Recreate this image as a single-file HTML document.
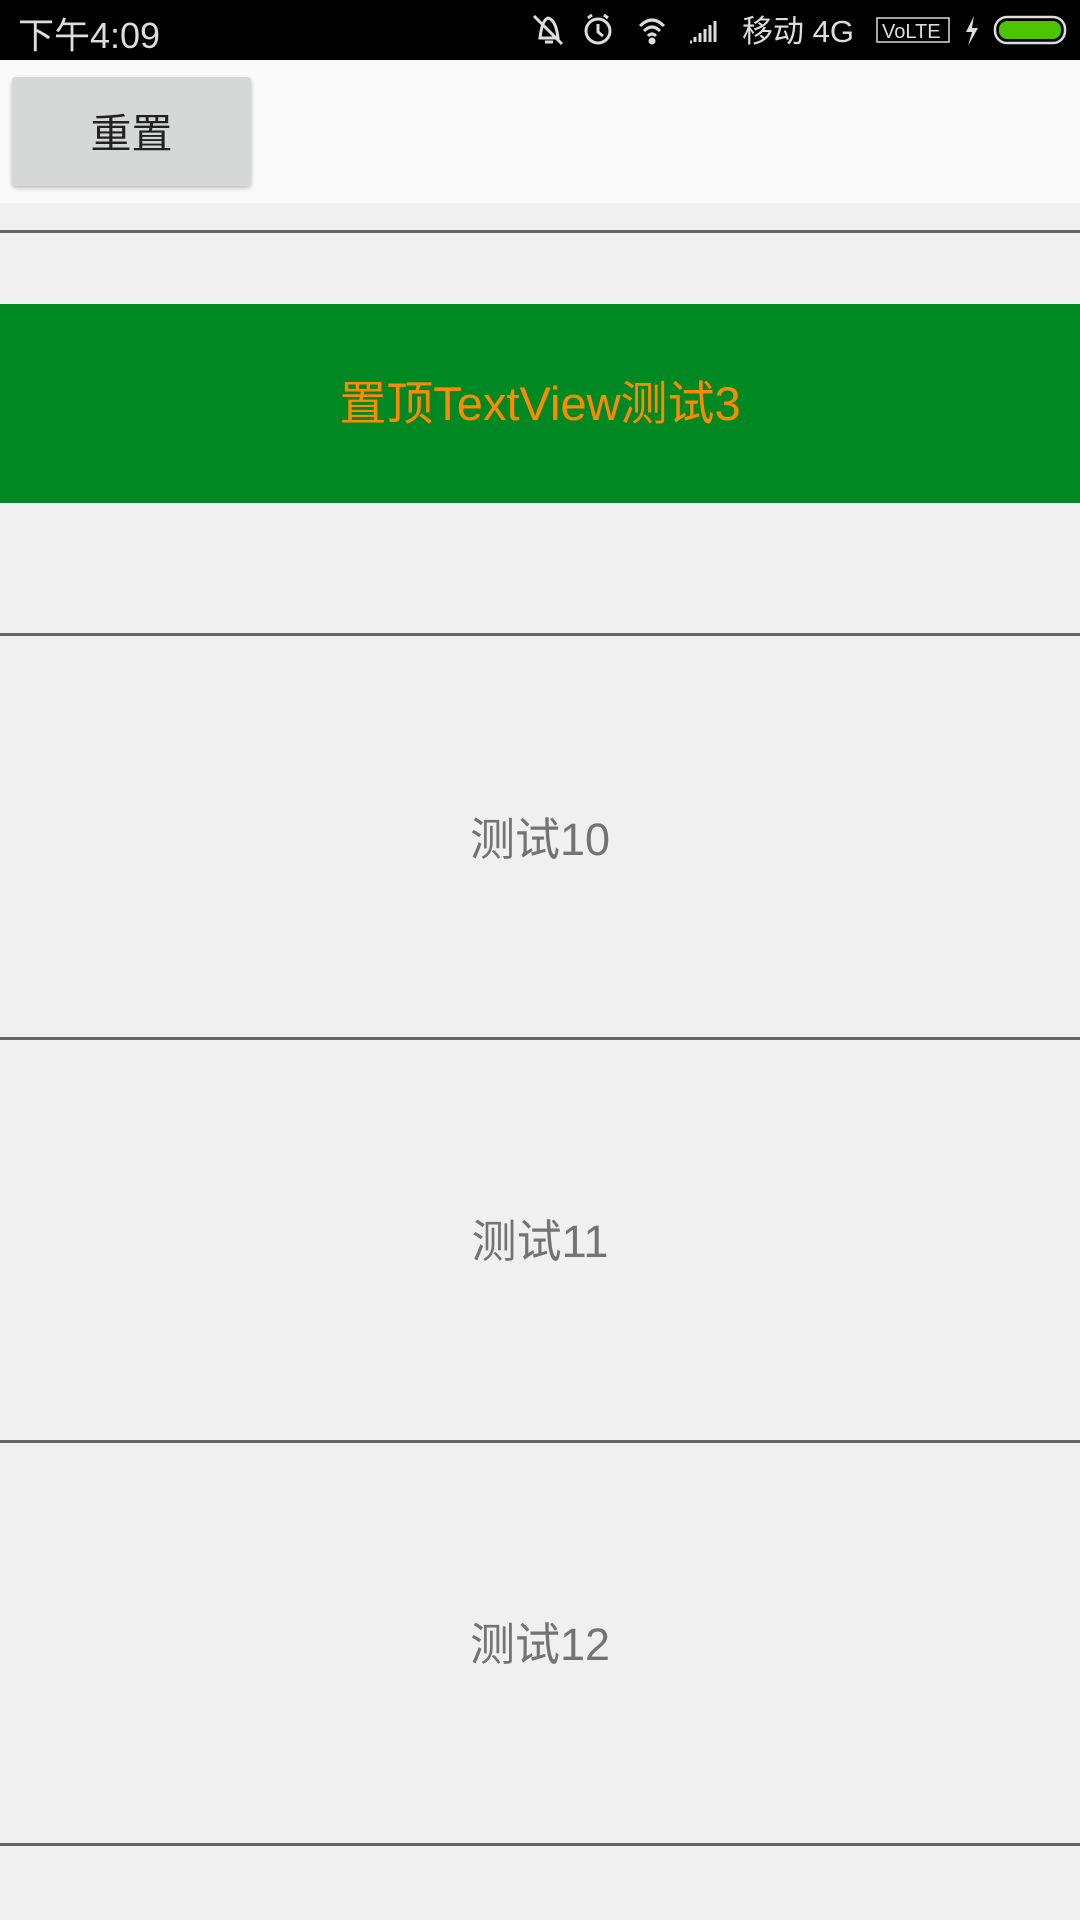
<!DOCTYPE html>
<html><head><meta charset="utf-8"><style>
*{margin:0;padding:0;box-sizing:border-box}
body{width:1080px;height:1920px;background:#f0f0f0;position:relative;overflow:hidden;font-family:"Liberation Sans","Noto Sans CJK SC",sans-serif}
.sb{position:absolute;left:0;top:0;width:1080px;height:60px;background:#000;color:#ddd}
.top{position:absolute;left:0;top:60px;width:1080px;height:143px;background:#fafafa}
.btn{position:absolute;left:12px;width:239px;height:109px;background:#d6d7d7;border-radius:4px;box-shadow:0 2px 4px rgba(0,0,0,.25);font-size:41px;color:#222;text-align:center;line-height:114px}
.line{position:absolute;left:0;width:1080px;height:3px;background:#666}
.green{position:absolute;left:0;top:304px;width:1080px;height:199px;background:#008922;color:#ff8a00;font-size:47px;text-align:center;line-height:199px}
.item{position:absolute;left:0;width:1080px;text-align:center;font-size:45px;color:#737373}
</style></head><body>
<div class="sb">
<div style="position:absolute;left:18px;top:7px;font-size:36px;color:#ddd">下午4:09</div>
<svg style="position:absolute;left:530px;top:12px" width="540" height="36" viewBox="0 0 540 36" fill="none" stroke="#ddd" stroke-width="3">
<path d="M10 26 Q12 8 18 6 Q26 8 28 26 Z M4 4 L32 32 M15 30 h8"/>
<circle cx="68" cy="19" r="12"/><path d="M68 12 v8 l5 4 M58 6 l4-3 M78 6 l-4-3"/>
<path d="M110 14 Q122 2 134 14 M114 19 Q122 11 130 19 M118 24 Q122 20 126 24"/><circle cx="122" cy="29" r="2" fill="#ddd"/>
<path d="M160 30 h2 M165 30 v-5 M170 30 v-9 M175 30 v-13 M180 30 v-17 M185 30 v-21" stroke-width="3"/>
<text x="212" y="30" font-size="31" fill="#ddd" stroke="none" font-family="Liberation Sans,Noto Sans CJK SC,sans-serif">移动 4G</text>
<rect x="347" y="6" width="72" height="24" stroke-width="1.5"/>
<text x="352" y="26" font-size="20" fill="#ddd" stroke="none" font-family="Liberation Sans,sans-serif">VoLTE</text>
<path d="M444 4 l-8 16 h6 l-4 14 l10-18 h-6 z" fill="#ddd" stroke="none"/>
<rect x="465" y="5" width="70" height="26" rx="12" stroke-width="2.5"/>
<rect x="469" y="9" width="62" height="18" rx="8" fill="#4cc400" stroke="none"/>
</svg>
</div>
<div class="top"><div class="btn" style="top:17px">重置</div></div>
<div class="line" style="top:230px"></div>
<div class="green">置顶TextView测试3</div>
<div class="line" style="top:633px"></div>
<div class="item" style="top:803px">测试10</div>
<div class="line" style="top:1037px"></div>
<div class="item" style="top:1205px">测试11</div>
<div class="line" style="top:1440px"></div>
<div class="item" style="top:1608px">测试12</div>
<div class="line" style="top:1843px"></div>
</body></html>
